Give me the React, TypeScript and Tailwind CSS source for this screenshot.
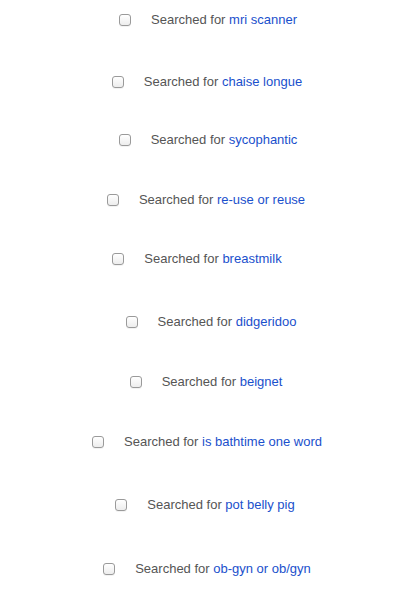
import React from "react";

const rows: { term: string; cls: string }[] = [
  { term: "mri scanner", cls: "mt-0 ml-[4px]" },
  { term: "chaise longue", cls: "mt-[42px] ml-[2px]" },
  { term: "sycophantic", cls: "mt-[38px] ml-[4px]" },
  { term: "re-use or reuse", cls: "mt-[40px]" },
  { term: "breastmilk", cls: "mt-[39px] mr-[18px]" },
  { term: "didgeridoo", cls: "mt-[43px] ml-[10px]" },
  { term: "beignet", cls: "mt-[40px]" },
  { term: "is bathtime one word", cls: "mt-[40px] ml-[2px]" },
  { term: "pot belly pig", cls: "mt-[43px] mr-[2px]" },
  { term: "ob-gyn or ob/gyn", cls: "mt-[44px] ml-[2px]" },
];

function Checkbox() {
  return (
    <span className="inline-block w-[12px] h-[12px] rounded-[3px] border border-[#9a9a9a] bg-gradient-to-b from-[#ffffff] to-[#ededed] shadow-[0_1px_0_rgba(0,0,0,0.05)] shrink-0" />
  );
}

export default function App() {
  return (
    <div
      className="w-[412px] h-[593px] bg-white overflow-hidden pt-[10px] flex flex-col items-center"
      style={{ fontFamily: '"Liberation Sans", Arial, Helvetica, sans-serif' }}
    >
      {rows.map((r) => (
        <div key={r.term} className={`${r.cls} h-[20px] flex items-center gap-[20px] text-[13px] leading-[20px]`}>
          <Checkbox />
          <span className="text-[#555555]">
            Searched for <span className="text-[#1a50cc]">{r.term}</span>
          </span>
        </div>
      ))}
    </div>
  );
}
